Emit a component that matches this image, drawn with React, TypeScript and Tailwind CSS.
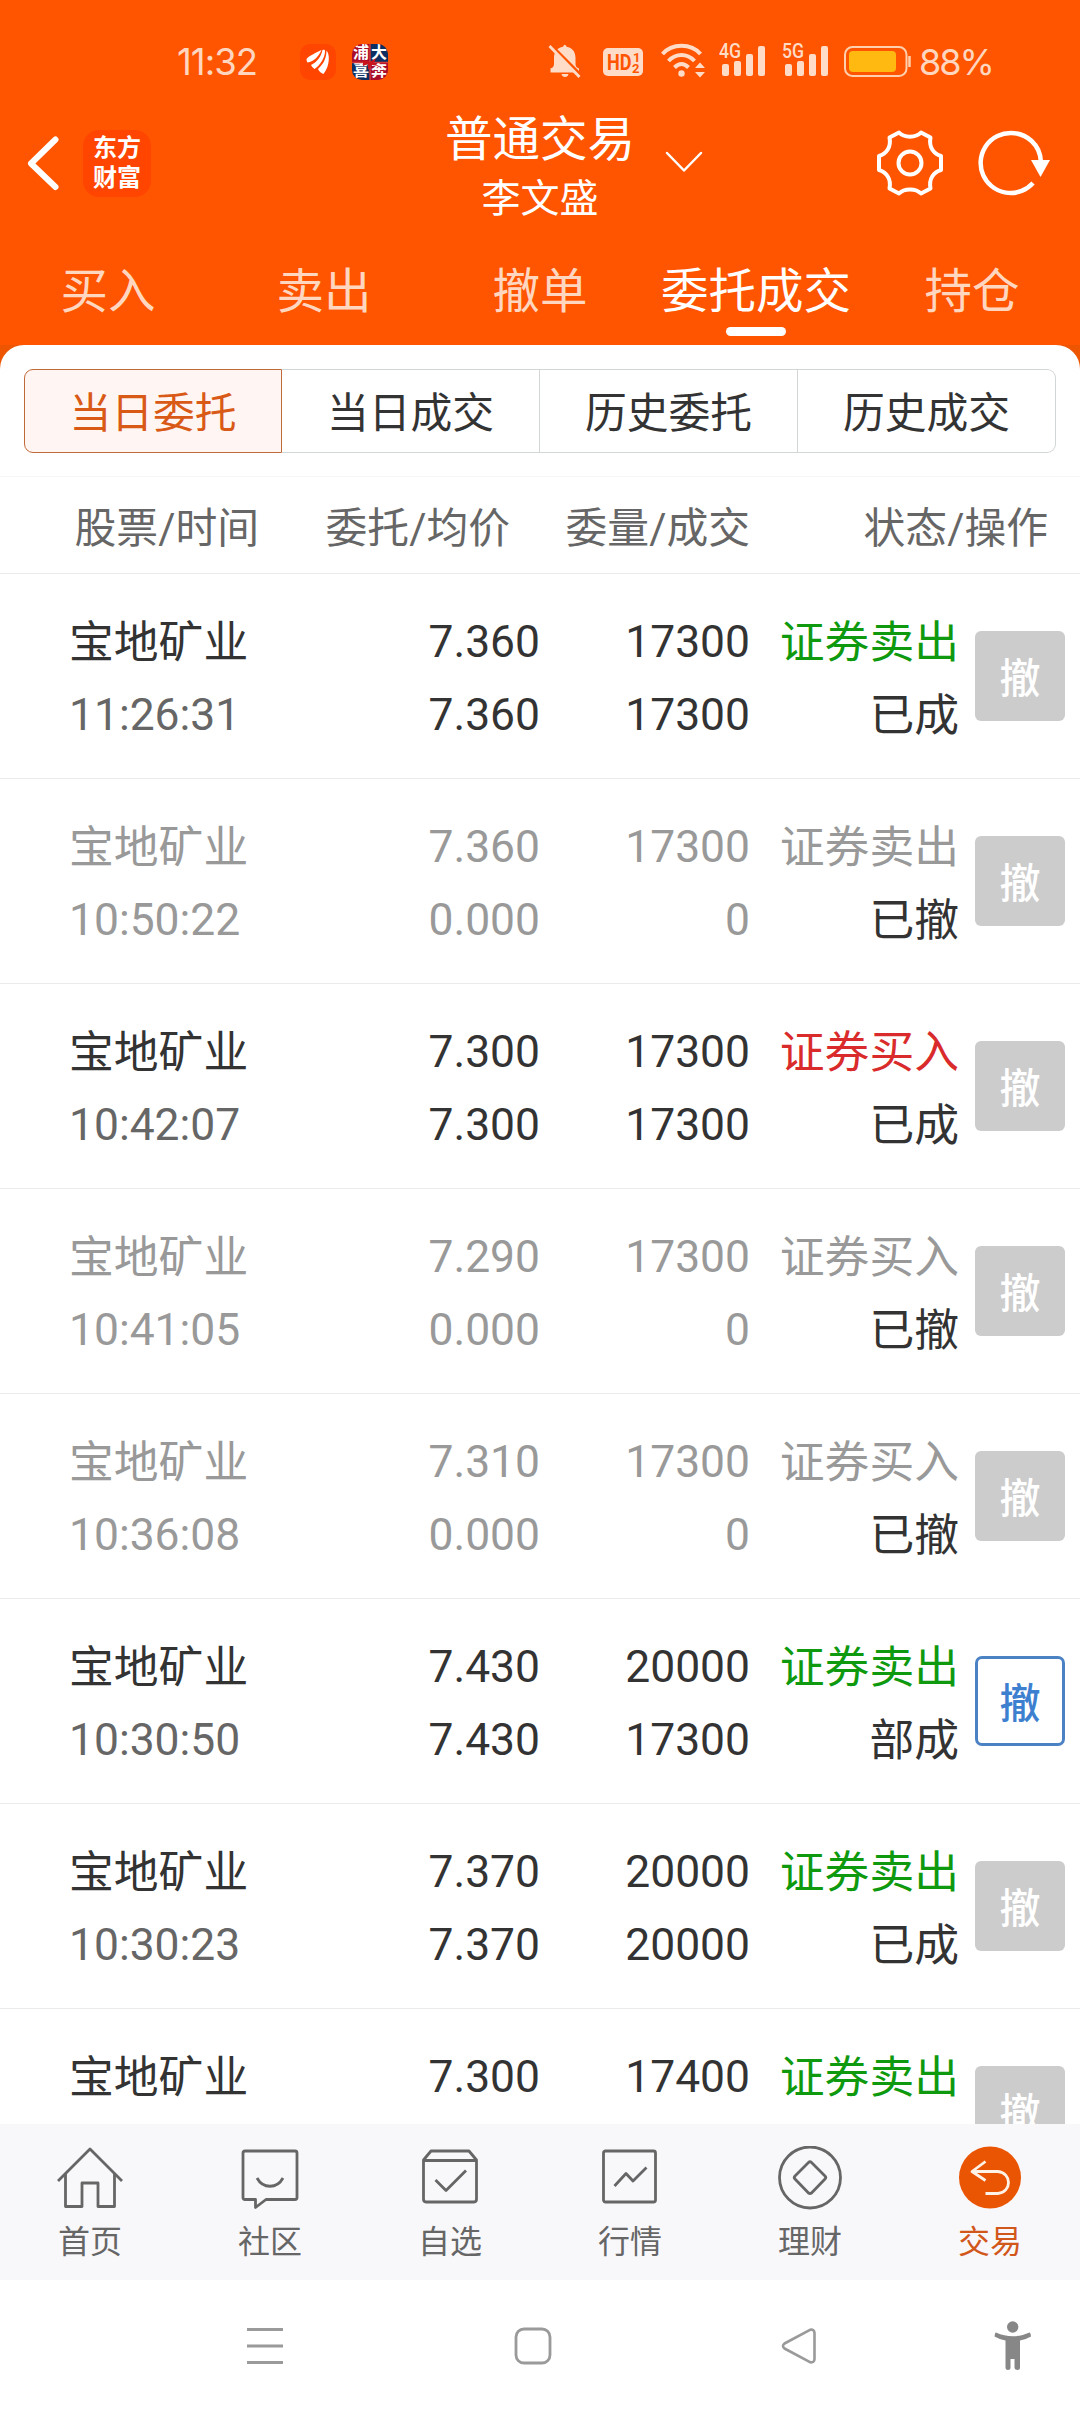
import React from "react";

type Side = "sell" | "buy";

type Order = {
  id: number;
  name: string;
  time?: string;
  price: string;
  avg?: string;
  qty: string;
  filled?: string;
  side: Side;
  status?: string;
};

const ORDERS: Order[] = [
  { id: 1, name: "宝地矿业", time: "11:26:31", price: "7.360", avg: "7.360", qty: "17300", filled: "17300", side: "sell", status: "已成" },
  { id: 2, name: "宝地矿业", time: "10:50:22", price: "7.360", avg: "0.000", qty: "17300", filled: "0", side: "sell", status: "已撤" },
  { id: 3, name: "宝地矿业", time: "10:42:07", price: "7.300", avg: "7.300", qty: "17300", filled: "17300", side: "buy", status: "已成" },
  { id: 4, name: "宝地矿业", time: "10:41:05", price: "7.290", avg: "0.000", qty: "17300", filled: "0", side: "buy", status: "已撤" },
  { id: 5, name: "宝地矿业", time: "10:36:08", price: "7.310", avg: "0.000", qty: "17300", filled: "0", side: "buy", status: "已撤" },
  { id: 6, name: "宝地矿业", time: "10:30:50", price: "7.430", avg: "7.430", qty: "20000", filled: "17300", side: "sell", status: "部成" },
  { id: 7, name: "宝地矿业", time: "10:30:23", price: "7.370", avg: "7.370", qty: "20000", filled: "20000", side: "sell", status: "已成" },
  { id: 8, name: "宝地矿业", price: "7.300", qty: "17400", side: "sell" },
];

function Signal({ label }: { label: string }) {
  return (
    <div className="relative h-[34px] w-[46px]">
      <svg width="46" height="34" viewBox="0 0 46 34" fill="#ffdcc8">
        <rect x="3" y="21" width="7" height="12" rx="2" />
        <rect x="15" y="18" width="7" height="15" rx="2" />
        <rect x="27" y="11" width="7" height="22" rx="2" />
        <rect x="39" y="3" width="7" height="30" rx="2" />
      </svg>
      <span className="absolute top-0 left-0 origin-left scale-x-[0.84] text-[21px] leading-[17px] font-medium text-[#ffdcc8]">
        {label}
      </span>
    </div>
  );
}

function StatusBar() {
  return (
    <div className="flex h-[104px] items-start pt-[43px] text-[#ffd6bf]">
      <div
        className="ml-[177px] w-[123px] text-[36.500px] leading-[39px] font-normal tracking-[-1px]"
        style={{ fontFamily: 'Inter, "Liberation Sans", sans-serif' }}
      >
        11:32
      </div>
      <div className="mt-px flex h-9 w-9 items-center justify-center rounded-[10px] bg-[#ff4500]">
        <svg width="24" height="26" viewBox="0 0 24 26" fill="#fff">
          <path d="M0.500 10C4 6 10 4 15.500 1C13 7 8 12.500 1.500 13.500Q0.500 12 0.500 10Z" />
          <path d="M5 16C11 13 15 8 16.500 1C18 0.500 19 1 19 2C19 9 14 16.500 8.500 20Q6 18.500 5 16Z" />
          <path d="M12 20C17.500 15 20.500 9 20.500 1.500C24 5 24 17 17.500 25C15.500 24.500 13 22.500 12 20Z" />
        </svg>
      </div>
      <div className="relative mt-px ml-4 grid h-9 w-9 grid-cols-2 overflow-hidden rounded-[10px] text-center text-[16px] leading-[18px] font-bold text-white">
        <span className="bg-[#a80d2c]">浦</span>
        <span className="bg-[#0e2f61]">大</span>
        <span className="bg-[#0e2f61]">喜</span>
        <span className="bg-[#a80d2c]">奔</span>
        <svg className="absolute inset-0" width="36" height="36" viewBox="0 0 36 36">
          <path d="M18 0V36M0 18.500H36" stroke="#d1383a" strokeWidth="1.500" />
          <path d="M11 16L18 18L24 14L22 19L27 22L20 21L16 26L16 20L11 22Z" fill="#c9141d" />
        </svg>
      </div>

      <svg className="ml-[160px]" width="34" height="36" viewBox="548 43 34 36" fill="#ffdcc8">
        <path d="M550.500 68.500Q554 67.500 554 64V58C554 51.500 557.500 48 563 46.800Q564.800 42.500 566.600 46.800C572 48 575.500 51.500 575.500 58V64Q575.500 67.500 579 68.500V72.500H550.500Z" />
        <path d="M561.500 74H568.500C568 78 562 78 561.500 74Z" />
        <path d="M549 43L584 78" stroke="#ff5500" strokeWidth="3" />
        <path d="M549.500 46L579.500 77" stroke="#ffdcc8" strokeWidth="2.800" />
      </svg>

      <div className="relative mt-[5px] ml-[21px] h-7 w-10 rounded-[5px] bg-[#ffdcc8] text-[#ff5500]">
        <span className="absolute top-[5px] left-[4px] origin-left scale-x-[0.82] text-[22px] leading-[19px] font-bold">HD</span>
        <span className="absolute top-[3px] left-[30px] text-[13px] leading-[13px] font-bold">1</span>
        <span className="absolute top-[14px] left-[29px] text-[13px] leading-[13px] font-bold">2</span>
      </div>

      <svg className="ml-[18px]" width="45" height="36" viewBox="661 43 45 36" fill="none" stroke="#ffdcc8" strokeWidth="4">
        <path d="M662.500 54C672 43 691 43 700.500 54" />
        <path d="M668.500 61C676 53 687 53 694.500 61" />
        <path d="M674.500 67.500C679 63 684 63 688.500 67.500" />
        <circle cx="681.500" cy="73.500" r="3.200" fill="#ffdcc8" stroke="none" />
        <path d="M695 68L700 62.500L705 68ZM695 72L700 77.500L705 72Z" fill="#ffdcc8" stroke="none" />
      </svg>
      <div className="ml-[13px]">
        <Signal label="4G" />
      </div>
      <div className="ml-[17px]">
        <Signal label="5G" />
      </div>
      <svg className="ml-4" width="68" height="36" viewBox="844 43 68 36">
        <rect x="845" y="47" width="61.500" height="29" rx="7.500" fill="none" stroke="#ffd0ae" strokeWidth="2" />
        <rect x="849" y="51" width="47" height="21" rx="4" fill="#ffb910" />
        <path d="M909.500 56V67" stroke="#ffd0ae" strokeWidth="2.500" />
      </svg>
      <div
        className="ml-[7px] text-[36px] leading-[39px] font-normal tracking-[-2px]"
        style={{ fontFamily: 'Inter, "Liberation Sans", sans-serif' }}
      >
        88%
      </div>
    </div>
  );
}

function TitleBar() {
  return (
    <div className="flex h-[136px] items-start">
      <svg
        className="mt-8 ml-[27px]"
        width="32"
        height="55"
        viewBox="0 0 32 55"
        fill="none"
        stroke="#fff"
        strokeWidth="6"
        strokeLinecap="round"
        strokeLinejoin="round"
      >
        <path d="M28.500 3.500L4 27.500L28.500 51" />
      </svg>
      <div className="mt-[26px] ml-6 h-[67px] w-[68px] rounded-[16px] bg-[#ff4500] pt-[3px] text-center text-[24px] leading-[30px] font-bold text-white">
        东方
        <br />
        财富
      </div>
      <div className="ml-[239px] w-[300px] text-center text-white">
        <div className="h-[65px] text-[47.500px] leading-[73px]">普通交易</div>
        <div className="text-[39px] leading-[60px]">李文盛</div>
      </div>
      <svg
        className="mt-[47px] -ml-[25px]"
        width="38"
        height="23"
        viewBox="0 0 38 23"
        fill="none"
        stroke="#fff"
        strokeWidth="2.500"
        strokeLinecap="round"
        strokeLinejoin="round"
      >
        <path d="M2 2L19 19.500L36 2" />
      </svg>
      <svg
        className="mt-[25px] ml-[173px]"
        width="68"
        height="68"
        viewBox="-34 -34 68 68"
        fill="none"
        stroke="#fff"
        strokeWidth="4"
        strokeLinejoin="round"
      >
        <path d="M-11 -30.500C-6 -25 6 -25 11 -30.500L20.500 -25.500C18.500 -15.500 24 -9 31 -7V7C24 9 18.500 15.500 20.500 25.500L11 30.500C6 25 -6 25 -11 30.500L-20.500 25.500C-18.500 15.500 -24 9 -31 7V-7C-24 -9 -18.500 -15.500 -20.500 -25.500Z" />
        <circle r="11.500" />
      </svg>
      <svg className="mt-[25px] ml-[34px]" width="74" height="68" viewBox="978 129 74 68" fill="none" stroke="#fff" strokeWidth="4.500">
        <path d="M1040.800 161C1040 145 1027 133 1011 133A30 30 0 1 0 1033 183" />
        <path d="M1031 160H1050L1040.500 177Z" fill="#fff" stroke="none" />
      </svg>
    </div>
  );
}

const TABS = ["买入", "卖出", "撤单", "委托成交", "持仓"];

function MainTabs() {
  return (
    <div className="grid h-[105px] grid-cols-5 text-center text-[47.500px] leading-[104px]">
      {TABS.map((tab) =>
        tab === "委托成交" ? (
          <div key={tab} className="relative text-white">
            {tab}
            <span className="absolute bottom-[9px] left-[78px] h-[9px] w-[60px] rounded-[5px] bg-white" />
          </div>
        ) : (
          <div key={tab} className="text-[#ffd6bf]">
            {tab}
          </div>
        ),
      )}
    </div>
  );
}

function SubTabs() {
  return (
    <div className="mx-6 mt-6 grid h-[84px] grid-cols-4 text-center text-[41.800px] leading-[76px] text-[#333]">
      <div className="rounded-l-[9px] border border-[#c06a3a] bg-[#fff6f3] pt-1.5 text-[#d95a17]">当日委托</div>
      <div className="border-y border-r border-[#d3d6d6] pt-1.5">当日成交</div>
      <div className="border-y border-r border-[#d3d6d6] pt-1.5">历史委托</div>
      <div className="rounded-r-[9px] border-y border-r border-[#d3d6d6] pt-1.5">历史成交</div>
    </div>
  );
}

function ColumnHeader() {
  return (
    <div className="mt-[23px] flex h-[98px] border-y border-t-[#f6f6f6] border-b-[#ebebeb] text-right text-[41.800px] leading-[103px] text-[#666]">
      <div className="w-[259px]">股票/时间</div>
      <div className="w-[251px]">委托/均价</div>
      <div className="w-[240px]">委量/成交</div>
      <div className="w-[298px]">状态/操作</div>
    </div>
  );
}

function OrderRow({ order }: { order: Order }) {
  const cancelled = order.status === "已撤";
  const open = order.status === "部成";
  const main = cancelled ? "text-[#999]" : "text-[#333]";
  const side = cancelled ? "text-[#999]" : order.side === "sell" ? "text-[#0f990f]" : "text-[#d92b2b]";
  return (
    <div className="flex h-[205px] shrink-0 border-b border-[#ebebeb] pt-8 text-[44.400px] leading-[73px]">
      <div className={`w-[300px] pl-[69px] ${main}`}>
        <div className="text-[44.800px]">{order.name}</div>
        <div className={cancelled ? "text-[#999]" : "text-[#666]"}>{order.time}</div>
      </div>
      <div className={`w-[240px] text-right ${main}`}>
        <div>{order.price}</div>
        <div>{order.avg}</div>
      </div>
      <div className={`w-[210px] text-right ${main}`}>
        <div>{order.qty}</div>
        <div>{order.filled}</div>
      </div>
      <div className="w-[209px] text-right text-[44.800px] text-[#333]">
        <div className={side}>{order.side === "sell" ? "证券卖出" : "证券买入"}</div>
        <div>{order.status}</div>
      </div>
      <div
        className={
          open
            ? "mt-[25px] ml-4 h-[90px] w-[90px] rounded-[7px] border-[3px] border-[#4a82c4] text-center text-[41px] leading-[90px] font-medium text-[#3d80d0]"
            : "mt-[25px] ml-4 h-[90px] w-[90px] rounded-[6px] bg-[#ccc] text-center text-[41px] leading-[96px] font-medium text-white"
        }
      >
        撤
      </div>
    </div>
  );
}

const NAV: { label: string; icon: React.ReactNode }[] = [
  {
    label: "首页",
    icon: (
      <>
        <path d="M1 34L33 2L65 34" />
        <path d="M8.500 27V59.500H25V36H41V59.500H57.500V27" />
      </>
    ),
  },
  {
    label: "社区",
    icon: (
      <>
        <path d="M8 4H58Q60 4 60 6V50.500Q60 52.500 58 52.500H29L18.500 60.500V52.500H8Q6 52.500 6 50.500V6Q6 4 8 4Z" />
        <path d="M20 31C26 42 40 42 46 31" />
      </>
    ),
  },
  {
    label: "自选",
    icon: (
      <>
        <path d="M6.500 13L14 4H52L59.500 13V52Q59.500 55 57 55H9Q6.500 55 6.500 52ZM6.500 13.500H59.500" />
        <path d="M18.500 33L29 43.500L49 23.500" />
      </>
    ),
  },
  {
    label: "行情",
    icon: (
      <>
        <rect x="6.500" y="4" width="52" height="51" rx="2" />
        <path d="M17.500 39L29 26.500L36 34L49.500 20.500" />
      </>
    ),
  },
  {
    label: "理财",
    icon: (
      <>
        <circle cx="33" cy="30.500" r="30.500" />
        <path d="M31.500 15.500Q33 14 34.500 15.500L48 29Q49.500 30.500 48 32L34.500 46Q33 47 31.500 46L18 32Q16.500 30.500 18 29Z" />
      </>
    ),
  },
  {
    label: "交易",
    icon: (
      <>
        <circle cx="33" cy="30.500" r="31" fill="#ea5504" stroke="none" />
        <path d="M28.500 14.500L15 24.500L28.500 33.500M15 24.500H41C55 26 55 45 41 46.500H28.500" stroke="#fff3e8" />
      </>
    ),
  },
];

function BottomNav() {
  return (
    <div className="grid h-[156px] grid-cols-6 bg-[#f8f8fb] pt-[22px] text-[#666]">
      {NAV.map((item) => (
        <div key={item.label} className={item.label === "交易" ? "flex flex-col items-center text-[#d2571a]" : "flex flex-col items-center"}>
          <svg width="66" height="66" viewBox="0 -1 66 66" fill="none" stroke="#666" strokeWidth="2.800" strokeLinejoin="round">
            {item.icon}
          </svg>
          <span className="text-[32px] leading-[60px]">{item.label}</span>
        </div>
      ))}
    </div>
  );
}

function SystemNav() {
  return (
    <div className="flex h-[132px] items-center bg-white pb-px">
      <svg className="ml-[247px]" width="36" height="38" viewBox="0 0 36 38" stroke="#9a9a9a" strokeWidth="3">
        <path d="M0 2.500H36M0 19H36M0 35.500H36" />
      </svg>
      <svg className="ml-[231px]" width="38" height="38" viewBox="0 0 38 38" fill="none" stroke="#9a9a9a" strokeWidth="2.800">
        <rect x="2" y="2" width="34" height="34" rx="8" />
      </svg>
      <svg className="ml-[229px]" width="36" height="38" viewBox="0 0 36 38" fill="none" stroke="#9a9a9a" strokeWidth="2.600" strokeLinejoin="round">
        <path d="M29 2.800L3.500 16.500Q0.500 19 3.500 21.500L29 35.200Q33.500 36 33.500 32V6Q33.500 2 29 2.800Z" />
      </svg>
      <svg className="ml-[177px]" width="38" height="50" viewBox="0 0 38 50" fill="#878787">
        <circle cx="18.700" cy="6" r="5.700" />
        <path d="M2 11.500C13 16.500 24.500 16.500 35.500 11.500Q36.500 11.500 37 15.500C33.500 17.500 30 18.500 26 19.500V47Q26 49 23.500 49T20.500 47V38H16.500V47Q16.500 49 14 49T11.500 47V19.500C7.500 18.500 4 17.500 0.500 15.500Q1 11.500 2 11.500Z" />
      </svg>
    </div>
  );
}

export default function App() {
  return (
    <div
      className="flex h-[2412px] w-[1080px] flex-col overflow-hidden bg-white"
      style={{ fontFamily: 'Roboto, "Noto Sans CJK SC", sans-serif' }}
    >
      <header className="bg-[#ff5500]">
        <StatusBar />
        <TitleBar />
        <MainTabs />
      </header>
      <main className="flex min-h-0 flex-1 flex-col bg-[linear-gradient(#ee5500_0_30px,#fff_30px)]">
        <div className="flex min-h-0 flex-1 flex-col overflow-hidden rounded-t-[24px] bg-white">
          <SubTabs />
          <ColumnHeader />
          <div className="flex min-h-0 flex-1 flex-col overflow-hidden">
            {ORDERS.map((order) => (
              <OrderRow key={order.id} order={order} />
            ))}
          </div>
        </div>
      </main>
      <BottomNav />
      <SystemNav />
    </div>
  );
}
